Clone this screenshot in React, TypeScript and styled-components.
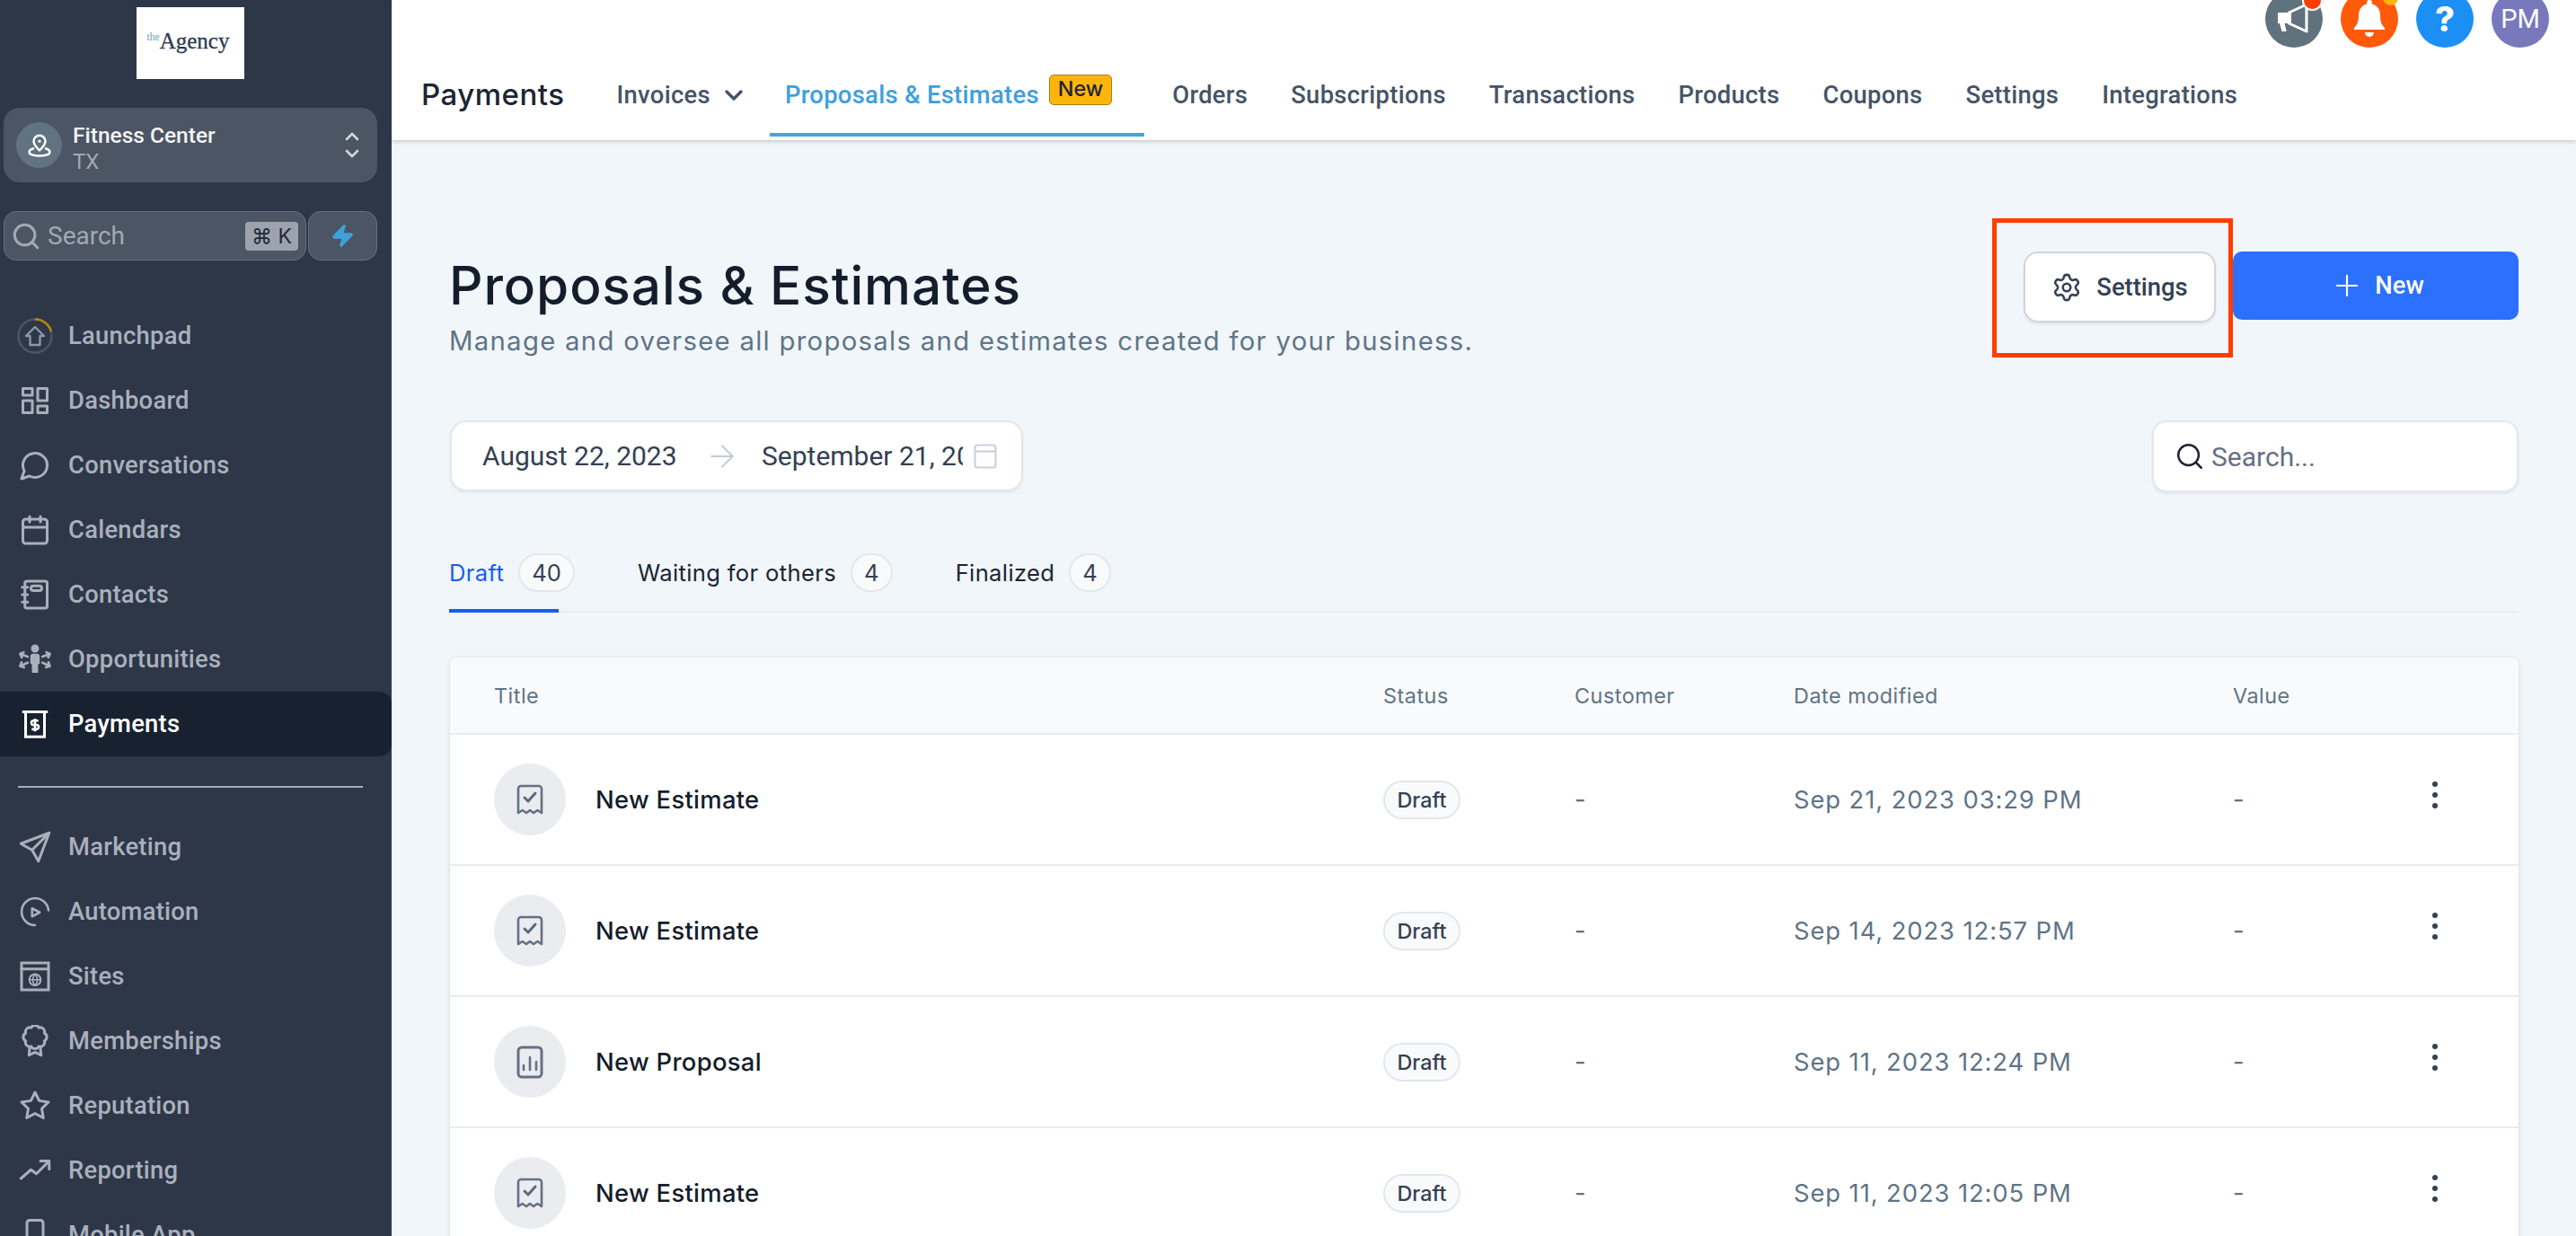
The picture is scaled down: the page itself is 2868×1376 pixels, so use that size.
import React from "react";
import styled, { createGlobalStyle } from "styled-components";
import { ChevronDown, ChevronUp, Settings as Gear, Plus, ArrowRight, Search as SearchIcon, Zap } from "lucide-react";

const Global = createGlobalStyle`
  html, body { margin: 0; padding: 0; background: #f1f6fa; }
  body { font-family: Inter, "Noto Sans", sans-serif; }
  #root { width: 2868px; height: 1376px; overflow: hidden; }
  * { box-sizing: border-box; }
`;

const Shell = styled.div`
  display: flex;
  width: 2868px;
  height: 1376px;
  overflow: hidden;
  background: #f1f6fa;
`;

const Sidebar = styled.aside`
  flex: 0 0 436px;
  height: 1376px;
  overflow: hidden;
  background: #2e3748;
  display: flex;
  flex-direction: column;
  padding-top: 8px;
  font-family: Roboto, sans-serif;
  & > * { flex-shrink: 0; }
`;

const Logo = styled.div`
  align-self: flex-start;
  margin-left: 152px;
  width: 120px;
  height: 80px;
  background: #fff;
  display: flex;
  align-items: center;
  justify-content: center;
  font-family: "Liberation Serif", serif;
  color: #2b3a4f;
  font-size: 25px;
  -webkit-text-stroke: 0.3px #2b3a4f;
  padding: 0 5px 4px 0;
`;

const LogoThe = styled.span`
  font-size: 11.5px;
  color: #6f9cc4;
  -webkit-text-stroke: 0;
  line-height: 1;
  align-self: flex-start;
  margin-top: 28px;
`;

const Location = styled.div`
  margin: 32px 16px 0 4px;
  height: 83px;
  border-radius: 18px;
  background: #4b5563;
  display: flex;
  align-items: center;
  padding: 0 16px 0 14px;
`;

const LocationAvatar = styled.div`
  width: 51px;
  height: 51px;
  border-radius: 50%;
  background: #617380;
  display: flex;
  align-items: center;
  justify-content: center;
  flex: none;
`;

const LocationText = styled.div`
  margin-left: 12px;
  padding-top: 6px;
  flex: 1;
  display: flex;
  flex-direction: column;
  gap: 1px;
`;

const LocationName = styled.div`
  color: #f3f4f6;
  font-size: 24.5px;
  font-weight: 500;
  line-height: 29px;
`;

const LocationRegion = styled.div`
  color: #a1a8b4;
  font-size: 24px;
  line-height: 28px;
`;

const Stepper = styled.div`
  display: flex;
  flex-direction: column;
  color: #d1d5db;
  gap: 0;
  & svg + svg { margin-top: -5px; }
`;

const SearchRow = styled.div`
  display: flex;
  gap: 2px;
  margin: 32px 16px 0 4px;
`;

const SidebarSearch = styled.div`
  flex: 0 0 337px;
  height: 55px;
  border-radius: 14px;
  background: #4b5563;
  border: 1.5px solid #667085;
  display: flex;
  align-items: center;
  padding: 0 8px 0 7px;
  color: #a1a8b4;
`;

const SidebarSearchLabel = styled.span`
  flex: 1;
  margin-left: 7px;
  font-size: 28px;
  line-height: 1;
`;

const Kbd = styled.span`
  width: 59px;
  height: 32px;
  border-radius: 4px;
  background: #9ca3af;
  color: #1f2937;
  font-size: 23px;
  line-height: 32px;
  text-align: center;
  white-space: nowrap;
  font-family: Inter, "DejaVu Sans", sans-serif;
`;

const Bolt = styled.div`
  flex: 1;
  height: 55px;
  border-radius: 14px;
  background: #4b5563;
  border: 1.5px solid #667085;
  display: flex;
  align-items: center;
  justify-content: center;
`;

const NavGroup = styled.nav<{ $top?: number }>`
  display: flex;
  flex-direction: column;
  margin-top: ${(p) => p.$top ?? 0}px;
`;

const NavItem = styled.a<{ $active?: boolean }>`
  height: 72px;
  flex: none;
  display: flex;
  align-items: center;
  gap: 19px;
  padding-left: 21px;
  font-size: 27.4px;
  font-weight: 500;
  letter-spacing: 0.25px;
  color: ${(p) => (p.$active ? "#ffffff" : "#a9b0bc")};
  background: ${(p) => (p.$active ? "#182130" : "transparent")};
  border-radius: ${(p) => (p.$active ? "0 14px 14px 0" : "0")};
  & svg { flex: none; }
`;

const NavRule = styled.hr`
  margin: 33px 32px 30px 20px;
  border: 0;
  height: 2px;
  background: #a5adba;
`;

const Main = styled.main`
  flex: 1;
  min-width: 0;
  display: flex;
  flex-direction: column;
`;

const TopBar = styled.header`
  height: 156px;
  flex: none;
  background: #fff;
  box-shadow: 0 2px 4px rgba(16, 24, 40, 0.18);
  display: flex;
  flex-direction: column;
  position: relative;
  z-index: 1;
`;

const Utility = styled.div`
  height: 53px;
  display: flex;
  justify-content: flex-end;
  align-items: flex-end;
  gap: 20px;
  padding-right: 30px;
`;

const RoundButton = styled.div<{ $bg: string }>`
  position: relative;
  width: 64px;
  height: 64px;
  border-radius: 50%;
  background: ${(p) => p.$bg};
  color: #fff;
  display: flex;
  align-items: center;
  justify-content: center;
  flex: none;
  font: 400 29px Roboto, sans-serif;
`;

const Dot = styled.span<{ $bg: string; $ring?: boolean }>`
  position: absolute;
  right: 0;
  top: 0;
  width: ${(p) => (p.$ring ? "23px" : "17px")};
  height: ${(p) => (p.$ring ? "23px" : "17px")};
  border-radius: 50%;
  background: ${(p) => p.$bg};
  border: ${(p) => (p.$ring ? "2px solid #fff" : "0")};
`;

const HelpMark = styled.span`
  font: 800 38px Inter, sans-serif;
  line-height: 1;
`;

const TabBar = styled.div`
  height: 99px;
  display: flex;
  align-items: stretch;
  gap: 14px;
  padding-left: 33px;
`;

const BarTitle = styled.h2`
  margin: 0 27px 0 0;
  align-self: center;
  padding-top: 4px;
  font-size: 33px;
  font-weight: 500;
  letter-spacing: 0.5px;
  color: #1d2433;
`;

const BarTab = styled.a<{ $active?: boolean }>`
  display: flex;
  align-items: center;
  padding: 10px 17px 0;
  gap: 11px;
  font-family: Roboto, sans-serif;
  font-size: 27.4px;
  font-weight: 500;
  letter-spacing: 0.3px;
  white-space: nowrap;
  color: ${(p) => (p.$active ? "#3f9fdc" : "#475467")};
  border-bottom: 4px solid ${(p) => (p.$active ? "#45a5de" : "transparent")};
`;

const BarChevron = styled(ChevronDown)`
  margin: 0 -7px 0 -1px;
`;

const NewFlag = styled.span`
  align-self: flex-start;
  margin: 20px 19px 0 0;
  padding: 0 9px;
  height: 34px;
  border-radius: 5px;
  background: #fdb50c;
  border: 1.5px solid #b07c10;
  color: #1d2433;
  font-family: Inter, sans-serif;
  font-size: 23.4px;
  line-height: 30px;
  font-weight: 500;
  letter-spacing: 0;
`;

const Page = styled.div`
  flex: 1;
  min-height: 0;
  overflow: hidden;
  padding: 124px 64px 0;
  display: flex;
  flex-direction: column;
  & > * { flex-shrink: 0; }
`;

const Head = styled.div`
  display: flex;
  align-items: flex-start;
  height: 120px;
`;

const HeadText = styled.div`
  flex: 1;
  padding-top: 3px;
`;

const Title = styled.h1`
  margin: 0;
  font-size: 58.5px;
  font-weight: 500;
  line-height: 70px;
  letter-spacing: 0.9px;
  color: #141d2c;
`;

const Subtitle = styled.p`
  margin: 7px 0 0;
  font-size: 29.3px;
  line-height: 40px;
  letter-spacing: 1.3px;
  color: #5f7486;
`;

const SettingsButton = styled.button`
  position: relative;
  width: 214px;
  height: 79px;
  margin-right: 19px;
  border-radius: 16px;
  background: #fff;
  border: 2px solid #d0d5dd;
  box-shadow: 0 2px 3px rgba(16, 24, 40, 0.08);
  display: flex;
  align-items: center;
  justify-content: center;
  gap: 16px;
  color: #344054;
  font: 500 27.4px Roboto, sans-serif;
`;

const CalloutFrame = styled.span`
  position: absolute;
  left: -37px;
  top: -39px;
  right: -21px;
  bottom: -41px;
  border: 5px solid #ff3d00;
  pointer-events: none;
`;

const NewButton = styled.button`
  width: 318px;
  height: 76px;
  border: 0;
  border-radius: 10px;
  background: #2b70ff;
  color: #fff;
  display: flex;
  align-items: center;
  justify-content: center;
  gap: 12px;
  padding-right: 3px;
  font: 500 27.4px Roboto, sans-serif;
`;

const Filters = styled.div`
  margin-top: 68px;
  display: flex;
  justify-content: space-between;
  align-items: flex-start;
`;

const DateBox = styled.div`
  width: 638px;
  height: 79px;
  margin-left: 1px;
  border-radius: 18px;
  background: #fff;
  border: 2px solid #e4e7ec;
  box-shadow: 0 2px 3px rgba(16, 24, 40, 0.06);
  display: flex;
  align-items: center;
  padding-left: 34px;
  color: #344054;
  font: 400 30px Roboto, sans-serif;
`;

const DateValue = styled.span<{ $clip?: number }>`
  white-space: nowrap;
  overflow: hidden;
  width: ${(p) => (p.$clip ? `${p.$clip}px` : "215px")};
  flex: none;
`;

const DateArrow = styled.span`
  margin: 0 24px 0 32px;
  display: flex;
  color: #c4c9d4;
`;

const DateIcon = styled.span`
  margin-left: 12px;
  display: flex;
  color: #cdd1da;
`;

const FindBox = styled.div`
  width: 408px;
  height: 80px;
  border-radius: 16px;
  background: #fff;
  border: 2px solid #e4e7ec;
  box-shadow: 0 2px 3px rgba(16, 24, 40, 0.06);
  display: flex;
  align-items: center;
  gap: 7px;
  padding-left: 23px;
  font: 400 30px Roboto, sans-serif;
  color: #667085;
`;

const Tabs = styled.div`
  margin-top: 60px;
  height: 74px;
  display: flex;
  gap: 70px;
  align-items: flex-start;
  padding-top: 8px;
  border-bottom: 2px solid #e9ecf0;
`;

const TabItem = styled.div<{ $active?: boolean }>`
  position: relative;
  display: flex;
  align-items: center;
  gap: 16px;
  height: 43px;
  font-size: 25.6px;
  letter-spacing: 0.35px;
  color: ${(p) => (p.$active ? "#155eef" : "#1d2433")};
  &::after {
    content: "";
    display: ${(p) => (p.$active ? "block" : "none")};
    position: absolute;
    left: 0;
    bottom: -23px;
    width: 122px;
    height: 4px;
    background: #155eef;
  }
`;

const Count = styled.span`
  height: 43px;
  min-width: 44px;
  padding: 0 13px;
  border-radius: 22px;
  border: 2px solid #e4e7ec;
  background: #f9fafb;
  color: #344054;
  font-size: 25.6px;
  font-weight: 400;
  line-height: 39px;
  text-align: center;
  letter-spacing: 0;
`;

const Card = styled.section`
  margin: 50px 0 0 1px;
  background: #fff;
  border-radius: 8px 8px 0 0;
  box-shadow: 0 1px 5px rgba(16, 24, 40, 0.14);
`;

const Grid = styled.div`
  display: grid;
  grid-template-columns: 990px 213px 244px 489px 221px 1fr;
  align-items: center;
  padding-left: 49px;
  border-bottom: 2px solid #eaecf0;
`;

const HeadRow = styled(Grid)`
  height: 86px;
  background: #f9fafb;
  border-radius: 8px 8px 0 0;
  font-size: 23.4px;
  letter-spacing: 0.5px;
  color: #5f7486;
  font-weight: 400;
`;

const BodyRow = styled(Grid)`
  height: 146px;
  color: #5f7486;
  font-size: 27.4px;
  letter-spacing: 0.9px;
`;

const NameCell = styled.div`
  display: flex;
  align-items: center;
  gap: 33px;
  color: #141d2c;
  font-size: 27.4px;
  font-weight: 500;
  letter-spacing: 0.3px;
`;

const DocCircle = styled.span`
  width: 80px;
  height: 80px;
  border-radius: 50%;
  background: #eaecf0;
  display: flex;
  align-items: center;
  justify-content: center;
  flex: none;
`;

const StatusPill = styled.span`
  display: inline-block;
  height: 43px;
  width: 86px;
  border-radius: 22px;
  border: 2px solid #e4e7ec;
  background: #f9fafb;
  color: #344054;
  font-size: 23.4px;
  font-weight: 500;
  line-height: 39px;
  text-align: center;
  letter-spacing: 0;
`;

const Kebab = styled.span`
  display: flex;
  margin-top: -10px;
`;

const LaunchRing = styled.svg`
  margin: 0 -2px;
`;

const ICON = "#a9b0bc";

const Line: React.FC<{ children: React.ReactNode; color?: string }> = ({ children, color = ICON }) => (
  <svg width="36" height="36" viewBox="0 0 24 24" fill="none" stroke={color} strokeWidth="2" strokeLinecap="round" strokeLinejoin="round">
    {children}
  </svg>
);

const icons: Record<string, React.ReactNode> = {
  Launchpad: (
    <LaunchRing width="40" height="40" viewBox="0 0 40 40" fill="none">
      <circle cx="20" cy="20" r="18.5" stroke="#4b5563" strokeWidth="2.5" />
      <path d="M20 1.5A18.5 18.5 0 0 1 38 15" stroke="#b8860b" strokeWidth="2.5" />
      <path d="M20 9L30 19H25.5V29H14.5V19H10Z" stroke="#8e96a4" strokeWidth="2.4" strokeLinejoin="round" transform="translate(0 1)" />
    </LaunchRing>
  ),
  Dashboard: (
    <Line>
      <rect x="3" y="3" width="7" height="5" />
      <rect x="14" y="3" width="7" height="9" />
      <rect x="3" y="12" width="7" height="9" />
      <rect x="14" y="16" width="7" height="5" />
    </Line>
  ),
  Conversations: <Line><path d="M7.9 20A9 9 0 1 0 4 16.1L2 22Z" /></Line>,
  Calendars: (
    <Line>
      <rect x="3" y="4" width="18" height="18" rx="2" />
      <path d="M3 10h18M8 2v4M16 2v4" />
    </Line>
  ),
  Contacts: (
    <Line>
      <rect x="4.5" y="2" width="16.5" height="20" rx="1.5" />
      <rect x="9" y="5.5" width="8" height="3.5" rx="1.7" />
      <path d="M2.5 6.5h4M2.5 12h4M2.5 17.5h4" />
    </Line>
  ),
  Opportunities: (
    <svg width="36" height="36" viewBox="0 0 24 24" fill={ICON} stroke="none">
      <circle cx="12" cy="4" r="3" />
      <path d="M8.5 9.5c0-1 1-1.7 2-1.7h3c1 0 2 .7 2 1.7V15l-1.2.8V22h-4.6v-6.2L8.5 15Z" />
      <g fill="none" stroke={ICON} strokeWidth="1.8" strokeLinecap="round" strokeLinejoin="round">
        <path d="M6.5 10 1 8M1 8l2.6-1.2M1 8l1.2 2.6" />
        <path d="M6.5 14.5 1 17M1 17l2.8.9M1 17l1-2.8" />
        <path d="M17.5 10 23 8M23 8l-2.6-1.2M23 8l-1.2 2.6" />
        <path d="M17.5 14.5 23 17M23 17l-2.8.9M23 17l-1-2.8" />
      </g>
    </svg>
  ),
  Payments: (
    <Line color="#fff">
      <path d="M2.5 3h19" strokeLinecap="butt" />
      <path d="M5 3v18.5h14V3" strokeLinecap="butt" strokeLinejoin="miter" />
      <path d="M14.5 9.5h-3.6a1.6 1.6 0 0 0 0 3.2h2.2a1.6 1.6 0 0 1 0 3.2H9.5M12 8v9.5" strokeWidth="1.7" strokeLinecap="butt" />
    </Line>
  ),
  Marketing: <Line><path d="M22.5 1.5 1.5 9.5 9.8 14.2 14.5 22.5ZM22.5 1.5 9.8 14.2" /></Line>,
  Automation: (
    <Line>
      <path d="M22 11A10 10 0 1 0 12 22" strokeWidth="1.7" />
      <path d="M9.8 9.5 15.5 12.5 9.8 15.5Z" strokeWidth="1.7" />
    </Line>
  ),
  Sites: (
    <Line>
      <rect x="2" y="2" width="20" height="20" strokeLinejoin="miter" />
      <path d="M2 6.5h20" />
      <circle cx="12" cy="14.5" r="4.2" strokeWidth="1.3" />
      <path d="M7.8 14.5h8.4M12 10.3c-2.2 2.6-2.2 5.8 0 8.4 2.2-2.6 2.2-5.8 0-8.4Z" strokeWidth="1.1" />
    </Line>
  ),
  Memberships: (
    <Line>
      <path d="M18.93 6.63A3.2 3.2 0 0 1 18.93 12.37 3.2 3.2 0 0 1 14.87 16.43 3.2 3.2 0 0 1 9.13 16.43 3.2 3.2 0 0 1 5.07 12.37 3.2 3.2 0 0 1 5.07 6.63 3.2 3.2 0 0 1 9.13 2.57 3.2 3.2 0 0 1 14.87 2.57 3.2 3.2 0 0 1 18.93 6.63Z" transform="translate(0 -.5)" />
      <path d="M8 17.5 7.5 22.5 12 20.3 16.5 22.5 16 17.5" />
    </Line>
  ),
  Reputation: <Line><path d="M12 2 15.09 8.26 22 9.27 17 14.14 18.18 21.02 12 17.77 5.82 21.02 7 14.14 2 9.27 8.91 8.26Z" /></Line>,
  Reporting: <Line><path d="M1.5 18 9 11.5 13 14.5 22.5 5M16 5h6.5v6" /></Line>,
  "Mobile App": <Line><rect x="6" y="1" width="12" height="22" rx="2" /></Line>,
};

const upper = ["Launchpad", "Dashboard", "Conversations", "Calendars", "Contacts", "Opportunities"];
const lower = ["Marketing", "Automation", "Sites", "Memberships", "Reputation", "Reporting", "Mobile App"];
const barTabs = ["Orders", "Subscriptions", "Transactions", "Products", "Coupons", "Settings", "Integrations"];

const Receipt = () => (
  <svg width="30" height="34" viewBox="0 0 30 34" fill="none" stroke="#667085" strokeWidth="3" strokeLinejoin="round" strokeLinecap="round">
    <path d="M2 32V5a3 3 0 0 1 3-3h20a3 3 0 0 1 3 3v27l-4.6-3-4.4 3-4-3-4 3-4.4-3Z" strokeWidth="2.6" />
    <path d="M9 15l4 4 8-9" stroke="#5b6b7d" />
  </svg>
);

const Chart = () => (
  <svg width="30" height="37" viewBox="0 0 30 37" fill="none" stroke="#667085" strokeWidth="3" strokeLinecap="round">
    <rect x="2" y="2" width="26" height="33" rx="4" />
    <path d="M8 27v-5M15 27V13M22 27V18" strokeWidth="2.6" />
  </svg>
);

const rows = [
  { name: "New Estimate", date: "Sep 21, 2023 03:29 PM", icon: <Receipt /> },
  { name: "New Estimate", date: "Sep 14, 2023 12:57 PM", icon: <Receipt /> },
  { name: "New Proposal", date: "Sep 11, 2023 12:24 PM", icon: <Chart /> },
  { name: "New Estimate", date: "Sep 11, 2023 12:05 PM", icon: <Receipt /> },
];

export default function App() {
  return (
    <Shell>
      <Global />
      <Sidebar>
        <Logo>
          <LogoThe>the</LogoThe>Agency
        </Logo>
        <Location>
          <LocationAvatar>
            <svg width="28" height="28" viewBox="0 0 28 28" fill="none" stroke="#fff" strokeWidth="2.4" strokeLinejoin="round">
              <path d="M14 19.5C10 15.5 7.5 12.8 7.5 9.2a6.5 6.5 0 0 1 13 0c0 3.6-2.5 6.3-6.5 10.3Z" />
              <circle cx="14" cy="9.2" r="1.6" fill="#fff" stroke="none" />
              <path d="M8 17c-3 .8-5.5 2.2-5.5 4.3 0 2.6 5 4.2 11.5 4.2s11.5-1.6 11.5-4.2c0-2.1-2.5-3.5-5.5-4.3" />
            </svg>
          </LocationAvatar>
          <LocationText>
            <LocationName>Fitness Center</LocationName>
            <LocationRegion>TX</LocationRegion>
          </LocationText>
          <Stepper>
            <ChevronUp size={24} strokeWidth={2.6} />
            <ChevronDown size={24} strokeWidth={2.6} />
          </Stepper>
        </Location>
        <SearchRow>
          <SidebarSearch>
            <SearchIcon size={34} strokeWidth={2.2} />
            <SidebarSearchLabel>Search</SidebarSearchLabel>
            <Kbd>⌘ K</Kbd>
          </SidebarSearch>
          <Bolt>
            <Zap size={27} color="#3fa0dc" fill="#3fa0dc" />
          </Bolt>
        </SearchRow>
        <NavGroup $top={48}>
          {upper.map((n) => (
            <NavItem key={n}>
              {icons[n]}
              {n}
            </NavItem>
          ))}
          <NavItem $active>
            {icons.Payments}
            Payments
          </NavItem>
        </NavGroup>
        <NavRule />
        <NavGroup>
          {lower.map((n) => (
            <NavItem key={n}>
              {icons[n]}
              {n}
            </NavItem>
          ))}
        </NavGroup>
      </Sidebar>
      <Main>
        <TopBar>
          <Utility>
            <RoundButton $bg="#61727f">
              <svg width="40" height="36" viewBox="0 0 40 36" fill="#fff">
                <path d="M2 11h11v12H9.5l2.2 9H6.5L4 23H2Z" />
                <path d="M14.5 11 34 2v30L14.5 23Z" fill="none" stroke="#fff" strokeWidth="3" strokeLinejoin="round" />
                <path d="M14 11h3v12h-3Z" />
              </svg>
              <Dot $bg="#ff3d00" $ring />
            </RoundButton>
            <RoundButton $bg="#ff5a0a">
              <svg width="36" height="42" viewBox="0 0 36 42" fill="#fff">
                <path d="M18 0a3 3 0 0 1 3 3v1.5c6 1.5 9 6.5 9 12.5 0 8 2 11 5 14v2H1v-2c3-3 5-6 5-14 0-6 3-11 9-12.5V3a3 3 0 0 1 3-3Z" />
                <path d="M13 36h10a5 5 0 0 1-10 0Z" />
              </svg>
              <Dot $bg="#fdb50c" />
            </RoundButton>
            <RoundButton $bg="#1b8ff3">
              <HelpMark>?</HelpMark>
            </RoundButton>
            <RoundButton $bg="#7878bd">PM</RoundButton>
          </Utility>
          <TabBar>
            <BarTitle>Payments</BarTitle>
            <BarTab>
              Invoices
              <BarChevron size={32} strokeWidth={2.6} />
            </BarTab>
            <BarTab $active>
              Proposals &amp; Estimates
              <NewFlag>New</NewFlag>
            </BarTab>
            {barTabs.map((t) => (
              <BarTab key={t}>{t}</BarTab>
            ))}
          </TabBar>
        </TopBar>
        <Page>
          <Head>
            <HeadText>
              <Title>Proposals &amp; Estimates</Title>
              <Subtitle>Manage and oversee all proposals and estimates created for your business.</Subtitle>
            </HeadText>
            <SettingsButton>
              <Gear size={34} strokeWidth={1.8} />
              Settings
              <CalloutFrame />
            </SettingsButton>
            <NewButton>
              <Plus size={38} strokeWidth={1.35} />
              New
            </NewButton>
          </Head>
          <Filters>
            <DateBox>
              <DateValue>August 22, 2023</DateValue>
              <DateArrow>
                <ArrowRight size={40} strokeWidth={1.2} />
              </DateArrow>
              <DateValue $clip={224}>September 21, 2023</DateValue>
              <DateIcon>
                <svg width="26" height="28" viewBox="0 0 26 28" fill="none" stroke="currentColor" strokeWidth="2.2">
                  <rect x="1.5" y="1.5" width="23" height="25" rx="3" />
                  <path d="M1.5 8.5h23" />
                </svg>
              </DateIcon>
            </DateBox>
            <FindBox>
              <SearchIcon size={34} color="#1d2433" strokeWidth={1.8} />
              Search...
            </FindBox>
          </Filters>
          <Tabs>
            <TabItem $active>
              Draft
              <Count>40</Count>
            </TabItem>
            <TabItem>
              Waiting for others
              <Count>4</Count>
            </TabItem>
            <TabItem>
              Finalized
              <Count>4</Count>
            </TabItem>
          </Tabs>
          <Card>
            <HeadRow>
              <span>Title</span>
              <span>Status</span>
              <span>Customer</span>
              <span>Date modified</span>
              <span>Value</span>
              <span />
            </HeadRow>
            {rows.map((r) => (
              <BodyRow key={r.date}>
                <NameCell>
                  <DocCircle>{r.icon}</DocCircle>
                  {r.name}
                </NameCell>
                <span>
                  <StatusPill>Draft</StatusPill>
                </span>
                <span>-</span>
                <span>{r.date}</span>
                <span>-</span>
                <Kebab>
                  <svg width="8" height="32" viewBox="0 0 8 32" fill="#344054">
                    <circle cx="4" cy="4" r="3" />
                    <circle cx="4" cy="16" r="3" />
                    <circle cx="4" cy="28" r="3" />
                  </svg>
                </Kebab>
              </BodyRow>
            ))}
          </Card>
        </Page>
      </Main>
    </Shell>
  );
}
